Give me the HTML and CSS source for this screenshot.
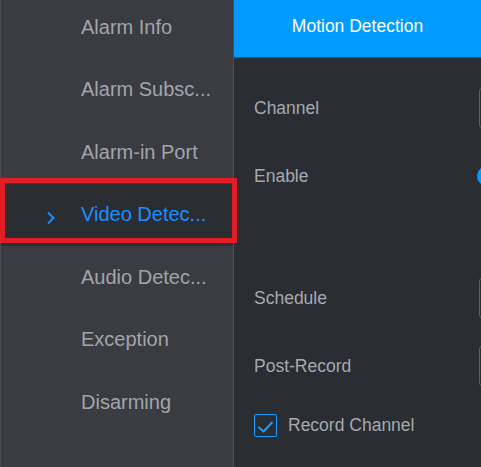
FILE: index.html
```html
<!DOCTYPE html>
<html lang="en">
<head>
<meta charset="utf-8">
<title>Motion Detection</title>
<link rel="stylesheet" href="styles.css">
</head>
<body>
<div class="app">
  <nav class="sidebar">
    <ul class="menu">
      <li class="menu-item"><span class="slot"></span><span class="text">Alarm Info</span></li>
      <li class="menu-item"><span class="slot"></span><span class="text">Alarm Subsc...</span></li>
      <li class="menu-item"><span class="slot"></span><span class="text">Alarm-in Port</span></li>
      <li class="menu-item active"><span class="slot"><svg class="chev" width="10" height="14" viewBox="0 0 10 14"><polyline points="2,1.5 7.5,7 2,12.5" fill="none" stroke="#1a8fff" stroke-width="2"/></svg></span><span class="text">Video Detec...</span></li>
      <li class="menu-item"><span class="slot"></span><span class="text">Audio Detec...</span></li>
      <li class="menu-item"><span class="slot"></span><span class="text">Exception</span></li>
      <li class="menu-item"><span class="slot"></span><span class="text">Disarming</span></li>
    </ul>
  </nav>
  <main class="content">
    <div class="tab-bar"><div class="tab">Motion Detection</div></div>
    <div class="form">
      <div class="row row-channel"><span class="label">Channel</span><div class="field"></div></div>
      <div class="row row-enable"><span class="label">Enable</span><div class="toggle"></div></div>
      <div class="row row-schedule"><span class="label">Schedule</span><div class="field"></div></div>
      <div class="row row-post"><span class="label">Post-Record</span><div class="field"></div></div>
      <div class="row row-check">
        <span class="checkbox"><svg width="21" height="21" viewBox="0 0 21 21"><polyline points="3.5,12 8.5,16.5 17.5,7" fill="none" stroke="#1a9bff" stroke-width="2"/></svg></span>
        <span class="check-label">Record Channel</span>
      </div>
    </div>
  </main>
  <div class="mark-box"></div>
</div>
</body>
</html>
```

FILE: styles.css
```css
* { box-sizing: border-box; }
html, body {
  margin: 0;
  padding: 0;
  width: 100%;
  height: 100%;
  overflow: hidden;
  background: #2a2d32;
  font-family: "Liberation Sans", Arial, sans-serif;
}
.app {
  position: relative;
  display: flex;
  width: 481px;
  height: 467px;
  overflow: hidden;
}
.sidebar {
  flex: 0 0 234px;
  height: 100%;
  background: #3a3c41;
  border-left: 1px solid #4b4d52;
  border-right: 1px solid #4d5055;
  overflow: hidden;
}
.menu {
  list-style: none;
  margin: -4px 0 0 0;
  padding: 0;
}
.menu-item {
  display: flex;
  align-items: center;
  height: 62.5px;
  padding-left: 44px;
  font-size: 20px;
  color: #a1a5ab;
  white-space: nowrap;
}
.menu-item .slot {
  flex: 0 0 36px;
  display: flex;
  align-items: center;
}
.menu-item.active {
  background: #2a2d32;
  color: #1a8fff;
}
.chev {
  display: block;
  margin-top: 6px;
  margin-left: 1px;
}
.content {
  flex: 1;
  display: flex;
  flex-direction: column;
  background: #2a2d32;
  min-width: 0;
}
.tab-bar {
  height: 58px;
  border-bottom: 1px solid #4a4d52;
  background: #009bff;
}
.tab {
  height: 57px;
  display: flex;
  align-items: center;
  justify-content: center;
  padding-bottom: 4px;
  color: #ffffff;
  font-size: 17.5px;
}
.form {
  padding: 30px 0 0 20px;
  display: flex;
  flex-direction: column;
}
.row {
  display: flex;
  align-items: center;
  height: 40px;
  font-size: 17.5px;
  color: #a6a9af;
  white-space: nowrap;
}
.label {
  flex: 0 0 225px;
}
.row-enable { margin-top: 28px; }
.row-schedule { margin-top: 82px; }
.row-post { margin-top: 28px; }
.row-check { margin-top: 27px; height: 24px; }
.row-enable .label { flex-basis: 223px; }
.field {
  flex: 0 0 120px;
  height: 40px;
  border: 1px solid #5c5f64;
  border-radius: 3px;
}
.toggle {
  flex: 0 0 44px;
  height: 20px;
  border-radius: 10px;
  background: #009bff;
}
.checkbox {
  flex: 0 0 23px;
  width: 23px;
  height: 23px;
  border: 1px solid #1a9bff;
  border-radius: 2px;
  display: flex;
}
.checkbox svg { display: block; }
.check-label {
  margin-left: 11px;
}
.mark-box {
  position: absolute;
  left: 0;
  top: 178px;
  width: 237px;
  height: 65px;
  border: 5px solid #e21d25;
  pointer-events: none;
}
```
